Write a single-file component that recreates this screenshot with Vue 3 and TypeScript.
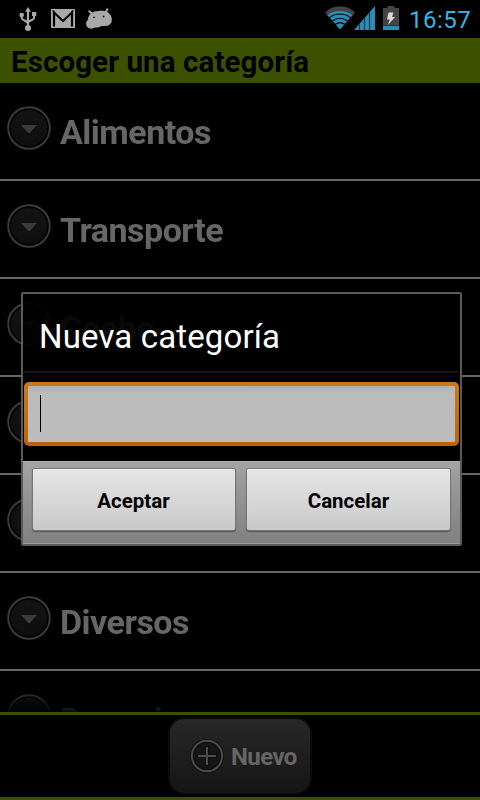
<script setup lang="ts">
import { ref } from 'vue'

interface Category {
  id: number
  name: string
}

const categories = ref<Category[]>([
  { id: 1, name: 'Alimentos' },
  { id: 2, name: 'Transporte' },
  { id: 3, name: 'Coche' },
  { id: 4, name: '' },
  { id: 5, name: '' },
  { id: 6, name: 'Diversos' },
  { id: 7, name: 'Donaciones' },
])
</script>

<template>
  <div class="screen">
    <header class="status">
      <svg class="usb" viewBox="0 0 18 24" width="18" height="24">
        <g fill="none" stroke="#a9a9a9" stroke-width="2.100">
          <path d="M9 3v17M2.700 7v4c0 2.600 6.300 2.600 6.300 5.800M15 6v5c0 2.400-6 2-6 5" />
        </g>
        <path d="M9 0l3 4.800H6z" fill="#a9a9a9" />
        <circle cx="9" cy="21" r="3" fill="#a9a9a9" />
        <circle cx="2.700" cy="8" r="2.300" fill="#a9a9a9" />
        <path d="M13 5h4.300v4H13z" fill="#a9a9a9" />
      </svg>
      <svg class="mail" viewBox="0 0 24 19" width="24" height="19">
        <path d="M0 0h24v19H0z" fill="#a9a9a9" />
        <path d="M3 17.500V3.500l9 8.500 9-8.500v14" fill="none" stroke="#000" stroke-width="2.200" />
        <path d="M1.500 1.400l2 1.500M22.500 1.400l-2 1.500" stroke="#000" stroke-width="1.300" />
      </svg>
      <svg class="droid" viewBox="0 0 26 21" width="26" height="21">
        <path d="M5.200 5L3.300 3.200M20 4l1.300-2.800" stroke="#a9a9a9" stroke-width="2" stroke-linecap="round" />
        <path d="M4.300 6C6 4 9 3.200 12.500 3c4-.3 7.500-.2 10 1.800 2.600 2 3.500 4.800 3.300 7.500-.2 3.200-2.700 5.500-5.700 5.700-2 .2-3.300-.2-4.500.1-1.400.4-2.200 1.400-4 1.500-1.300.1-1.800-.3-2.600 0-1.300.6-2.600 1.200-4.500 1C1.800 20.300.1 18.300.1 15.700c0-1.800.8-3 2-3.900-.2-2.200.8-4 2.200-5.800z" fill="#a9a9a9" />
        <circle cx="8" cy="9.300" r=".9" fill="#111" />
        <circle cx="17.600" cy="8.500" r=".9" fill="#111" />
      </svg>
      <span class="spacer"></span>
      <svg class="wifi" viewBox="0 0 30 24" width="30" height="24">
        <path d="M0 6.400C8-1.700 22-1.700 30 6.400l-3.200 4.200C20 4.600 10 4.600 3.200 10.600z" fill="#444" />
        <path d="M2.500 9.300C9.500 3.700 20.500 3.700 27.500 9.300L15 23.500z" fill="#2a8db3" />
        <g fill="none" stroke="#000" stroke-width="1.100">
          <path d="M4.500 11.600c6-4.800 15-4.800 21 0M7.500 15c4.500-3.600 10.500-3.600 15 0M10.300 18.300c3-2.200 6.400-2.200 9.400 0" />
        </g>
      </svg>
      <svg class="signal" viewBox="0 0 21 24" width="21" height="24">
        <path d="M0 24L21 0v24z" fill="#2a8db3" />
        <path d="M5.500 17.800v6.200M10.500 12v12M15.500 6.300v17.700" stroke="#0b3b50" stroke-width="1.200" />
      </svg>
      <svg class="battery" viewBox="0 0 16 24" width="16" height="24">
        <path d="M4.500 0h7v2H16v17.500H0V2h4.500z" fill="#444" />
        <path d="M0 19.800h16V24H0z" fill="#2a8db3" />
        <path d="M5.500 6.500h5L9 11h3l-7 8 1.700-5.600H4z" fill="#d8d8d8" />
      </svg>
      <span class="clock">16:57</span>
    </header>

    <h1 class="heading">Escoger una categoría</h1>

    <ul class="list">
      <li v-for="c in categories" :key="c.id" class="row">
        <svg class="toggle" viewBox="0 0 44 44" width="44" height="44">
          <defs>
            <linearGradient id="disc" x1="0" y1="0" x2="0" y2="1">
              <stop offset="0" stop-color="#131313" />
              <stop offset="1" stop-color="#0e0e0e" />
            </linearGradient>
          </defs>
          <circle cx="22" cy="22" r="20.800" fill="#030303" stroke="#3b3b3b" stroke-width="1.900" />
          <circle cx="22" cy="22" r="18" fill="url(#disc)" />
          <path d="M14 19h16l-7.200 8h-1.600z" fill="#3b3b3b" />
        </svg>
        <span class="name">{{ c.name }}</span>
      </li>
    </ul>

    <footer class="footer">
      <button class="new">
        <svg viewBox="0 0 34 34" width="34" height="34">
          <circle cx="17" cy="17" r="15" fill="#161616" stroke="#0d0d0d" stroke-width="4" />
          <path d="M17 7v20M7 17h20" stroke="#0d0d0d" stroke-width="4.500" />
          <circle cx="17" cy="17" r="15.200" fill="none" stroke="#4d4d4d" stroke-width="1.900" />
          <path d="M17 8v18M8 17h18" stroke="#4d4d4d" stroke-width="2.100" />
        </svg>
        <span class="new-text">Nuevo</span>
      </button>
    </footer>

    <section class="dialog">
      <h2 class="title"><span>Nueva categoría</span></h2>
      <div class="field"><span class="caret"></span></div>
      <div class="actions">
        <button class="action accept">Aceptar</button>
        <button class="action">Cancelar</button>
      </div>
    </section>
  </div>
</template>

<style>
body {
  margin: 0;
  background: #000;
}
</style>

<style scoped>
* {
  box-sizing: border-box;
}
.screen {
  position: relative;
  width: 480px;
  height: 800px;
  overflow: hidden;
  display: flex;
  flex-direction: column;
  background: #000;
  font-family: Roboto, "Liberation Sans", sans-serif;
}
.status {
  flex: none;
  height: 38px;
  display: flex;
  align-items: flex-start;
  padding: 6px 9px 0 19px;
}
.status svg {
  flex: none;
}
.usb {
  margin-top: 1px;
}
.mail {
  margin: 3px 0 0 14px;
}
.droid {
  margin: 2px 0 0 11px;
}
.spacer {
  flex: 1;
}
.signal {
  margin-left: -1px;
}
.battery {
  margin-left: 8px;
}
.clock {
  width: 62px;
  margin-left: 10px;
  font-size: 24px;
  letter-spacing: 0.500px;
  line-height: 29px;
  white-space: nowrap;
  color: #33b5e5;
}
.heading {
  flex: none;
  margin: 0;
  height: 45px;
  padding-left: 11px;
  background: #3c5100;
  color: #000;
  font-size: 29.500px;
  letter-spacing: 0.100px;
  font-weight: 700;
  line-height: 48px;
  white-space: nowrap;
}
.list {
  flex: none;
  height: 629px;
  margin: 0;
  padding: 0;
  overflow: hidden;
  list-style: none;
  -webkit-mask-image: linear-gradient(#000 604px, transparent 632px);
  mask-image: linear-gradient(#000 604px, transparent 632px);
}
.row {
  height: 98px;
  display: flex;
  align-items: flex-start;
  padding: 23px 0 0 7px;
  border-bottom: 2px solid #666;
}
.toggle {
  flex: none;
}
.name {
  margin: 6px 0 0 9px;
  font-size: 34px;
  letter-spacing: -0.500px;
  font-weight: 700;
  line-height: 40px;
  color: #666;
}
.footer {
  flex: none;
  height: 88px;
  display: flex;
  justify-content: center;
  align-items: flex-start;
  padding-top: 4px;
  border-top: 3px solid #3c5100;
  border-bottom: 3px solid #3c5100;
}
.new {
  width: 140px;
  height: 74px;
  padding: 0 0 0 20px;
  display: flex;
  align-items: center;
  border: 0;
  border-radius: 14px;
  background: linear-gradient(#272727, #151515);
  box-shadow: 0 0 0 2px #0a0a0a;
  font-family: inherit;
  color: #666;
}
.new-text {
  margin: 1px 0 0 7px;
  font-size: 24px;
  letter-spacing: -0.600px;
  font-weight: 700;
  line-height: 28px;
}
.dialog {
  position: absolute;
  left: 21px;
  top: 292px;
  width: 441px;
  height: 254px;
  display: flex;
  flex-direction: column;
  border: 2px solid #5a5a5a;
  border-radius: 2px;
  background: rgba(0, 0, 0, 0.91);
}
.title {
  flex: none;
  height: 79px;
  margin: 0 1px;
  padding: 23px 0 0 15px;
  border-bottom: 2px solid #131313;
  color: #fff;
  font-size: 33px;
  letter-spacing: 0.140px;
  font-weight: 400;
  line-height: 40px;
  white-space: nowrap;
}
.field {
  flex: none;
  height: 64px;
  margin: 9px 1px 0;
  padding: 9px 12px;
  border: 4px solid transparent;
  border-radius: 5px;
  background:
    linear-gradient(#b1b1b1, #bcbcbc 8px, #bcbcbc) padding-box,
    linear-gradient(#c87a20, #bd6208) border-box;
}
.caret {
  display: block;
  width: 1px;
  height: 37px;
  background: #000;
}
.actions {
  flex: none;
  height: 83px;
  margin-top: 15px;
  padding: 7px 10px 0;
  display: flex;
  justify-content: space-between;
  border-top: 1px solid #b0b0b0;
  border-bottom: 1px solid #999;
  background: linear-gradient(#a3a3a3, #808080);
}
.action {
  width: 203px;
  height: 61px;
  padding: 2px 0 0;
  border: 0;
  border-radius: 2px;
  background: linear-gradient(#e6e6e6, #c9c9c9);
  box-shadow: 0 0 0 1px #777, 0 1px 1px 1px #555, inset 0 1px 0 #f0f0f0;
  color: #000;
  font-family: inherit;
  font-size: 20.500px;
  font-weight: 700;
}
.accept {
  width: 202px;
  padding-right: 1px;
}
</style>
